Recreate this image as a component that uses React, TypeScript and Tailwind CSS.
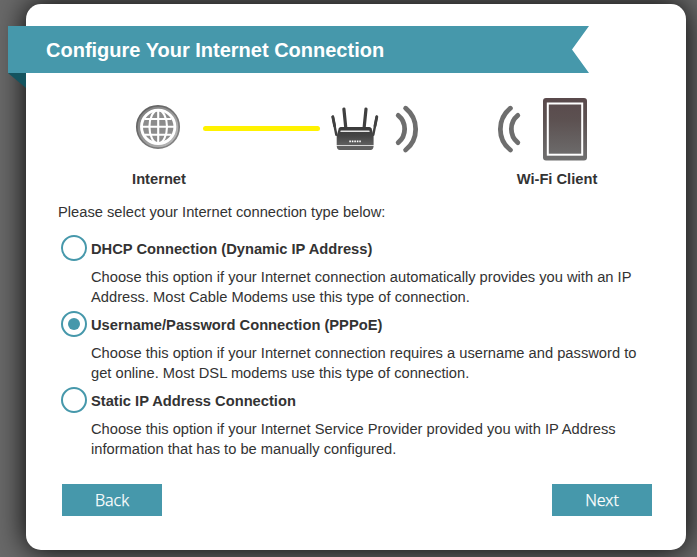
const options = [
  {
    title: "DHCP Connection (Dynamic IP Address)",
    lines: [
      "Choose this option if your Internet connection automatically provides you with an IP",
      "Address. Most Cable Modems use this type of connection.",
    ],
    selected: false,
  },
  {
    title: "Username/Password Connection (PPPoE)",
    lines: [
      "Choose this option if your Internet connection requires a username and password to",
      "get online. Most DSL modems use this type of connection.",
    ],
    selected: true,
  },
  {
    title: "Static IP Address Connection",
    lines: [
      "Choose this option if your Internet Service Provider provided you with IP Address",
      "information that has to be manually configured.",
    ],
    selected: false,
  },
];

function Ribbon({ title }: { title: string }) {
  return (
    <div className="-ml-[18px] flex h-[47px] w-[581px] items-center bg-[#4698ab] pl-[38px] [clip-path:polygon(0_0,100%_0,564px_23.5px,100%_100%,0_100%)]">
      <h1 className="text-[20px] leading-[24px] font-bold text-white">{title}</h1>
    </div>
  );
}

function Globe() {
  return (
    <svg className="h-[46px] w-[46px]" viewBox="0 0 46 46" fill="none">
      <defs>
        <linearGradient id="rim" x1="0" y1="0" x2="1" y2="1">
          <stop offset="0" stopColor="#777" />
          <stop offset=".5" stopColor="#999" />
          <stop offset="1" stopColor="#c4c4c4" />
        </linearGradient>
        <linearGradient id="edge" x1="0" y1="0" x2="1" y2="1">
          <stop offset="0" stopColor="#5c5c5c" />
          <stop offset="1" stopColor="#888" />
        </linearGradient>
      </defs>
      <circle cx="23" cy="23" r="21.2" fill="url(#rim)" stroke="url(#edge)" strokeWidth="1.7" />
      <circle cx="23.2" cy="22.8" r="16.7" fill="#8c8c8c" stroke="white" strokeWidth="2.9" />
      <g stroke="white" strokeWidth="2.1">
        <ellipse cx="23.2" cy="22.8" rx="8.8" ry="16.7" />
        <path d="M23.2 6v33.5M6.5 22.8h33.4M10 15h26.4M10 30.7h26.4" />
      </g>
    </svg>
  );
}

function Router() {
  return (
    <svg className="h-[46px] w-[50px]" viewBox="330 106 50 46">
      <defs>
        <linearGradient id="body" x1="0" y1="0" x2="0" y2="1">
          <stop offset="0" stopColor="#3a3a3a" />
          <stop offset=".5" stopColor="#454545" />
          <stop offset="1" stopColor="#606060" />
        </linearGradient>
      </defs>
      <g stroke="#404040" strokeLinecap="round" fill="none">
        <path d="M332.8 116.8l3.5 18M376.8 116.8l-3.5 18" strokeWidth="2.4" />
        <path d="M332.8 116.8l1.8 9M376.8 116.8l-1.8 9" strokeWidth="2.9" />
        <path d="M343.9 109l1.8 18M366 109l-1.8 18" strokeWidth="3.2" />
      </g>
      <path d="M340.7 126.9h28.6q1.8 0 2.3 1.6l2 7.5v9.2h-36.9v-9.2l2-7.5q.5-1.6 2-1.6z" fill="url(#body)" />
      <path d="M340.7 130.6h28.6l.4 1.3h-29.4z" fill="#e5e5e5" />
      <path d="M336.7 146.1h36.9q-.3 4-3 4h-30.9q-2.7 0-3-4z" fill="#606060" />
      <path d="M349.3 141.3h11.5" stroke="white" strokeWidth="1.7" strokeDasharray="1.6 .9" />
    </svg>
  );
}

function Waves({ flipped = false }: { flipped?: boolean }) {
  return (
    <svg
      className={flipped ? "h-[50px] w-[26px] -scale-x-100" : "h-[50px] w-[26px]"}
      viewBox="394 104 26 50"
      fill="none"
      stroke="#6e6e6e"
      strokeWidth="4.8"
      strokeLinecap="round"
    >
      <path d="M405.6 108.2c13.4 11 13.4 31 0 41.8" />
      <path d="M398.2 115.4c8.6 7 8.6 20 0 27.2" />
    </svg>
  );
}

function Tablet() {
  return (
    <svg className="h-[63px] w-[44px]" viewBox="0 0 44 63">
      <defs>
        <linearGradient id="screen" x1="0" y1="0" x2="0" y2="1">
          <stop offset="0" stopColor="#59494b" />
          <stop offset=".35" stopColor="#5c5151" />
          <stop offset="1" stopColor="#6f6f6f" />
        </linearGradient>
      </defs>
      <rect width="44" height="62.5" rx="3" fill="url(#screen)" />
      <rect x="4.8" y="5.5" width="34.4" height="51.2" fill="none" stroke="white" strokeWidth="2" />
    </svg>
  );
}

export default function App() {
  return (
    <div className="h-[557px] w-[697px] overflow-hidden bg-[#696969] pt-[4px] pl-[26px] font-['Liberation_Sans',Arial,sans-serif] text-[14.7px] leading-[20px] text-[#333]">
      <main className="relative h-[546px] w-[660px] rounded-[15px] bg-white pt-[22px] shadow-[0_0_30px_#000]">
        <svg className="absolute top-[69px] -left-[18px] h-[15px] w-[18px]" viewBox="0 0 18 15">
          <path d="M0 0h18v15z" fill="#14545f" />
        </svg>
        <Ribbon title="Configure Your Internet Connection" />

        <section className="flex h-[95px] items-start pt-[24px]">
          <div className="mt-[7px] ml-[109px]"><Globe /></div>
          <div className="mt-[29px] ml-[22px] h-[5px] w-[117px] rounded-full bg-[#fff200]" />
          <div className="mt-[9px] ml-[10px]"><Router /></div>
          <div className="mt-[7px] ml-[14px]"><Waves /></div>
          <div className="mt-[7px] ml-[76px]"><Waves flipped /></div>
          <div className="mt-[1px] ml-[21px]"><Tablet /></div>
        </section>
        <div className="flex h-[22px] pt-[1px] font-bold">
          <span className="ml-[83px] w-[100px] text-center">Internet</span>
          <span className="ml-[272px] w-[152px] text-center">Wi-Fi Client</span>
        </div>

        <p className="mt-[12px] ml-[32px]">Please select your Internet connection type below:</p>
        <div className="mt-[13px] ml-[35px]">
          {options.map((option) => (
            <div key={option.title} className="flex h-[76px]">
              <span className="flex size-[26px] items-center justify-center rounded-full border-2 border-[#4698ab]">
                {option.selected && <span className="size-[12px] rounded-full bg-[#4698ab]" />}
              </span>
              <div className="ml-[4px] pt-[4px]">
                <h2 className="font-bold">{option.title}</h2>
                <p className="mt-[8px] whitespace-nowrap">
                  {option.lines[0]}
                  <br />
                  {option.lines[1]}
                </p>
              </div>
            </div>
          ))}
        </div>
        <div className="mt-[21px] ml-[36px] flex w-[590px] justify-between font-['Noto_Sans',sans-serif] text-[16px] font-light text-white [-webkit-text-stroke:0.25px_white]">
          <button className="h-[32px] w-[100px] bg-[#4698ab]">Back</button>
          <button className="h-[32px] w-[100px] bg-[#4698ab]">Next</button>
        </div>
      </main>
    </div>
  );
}
